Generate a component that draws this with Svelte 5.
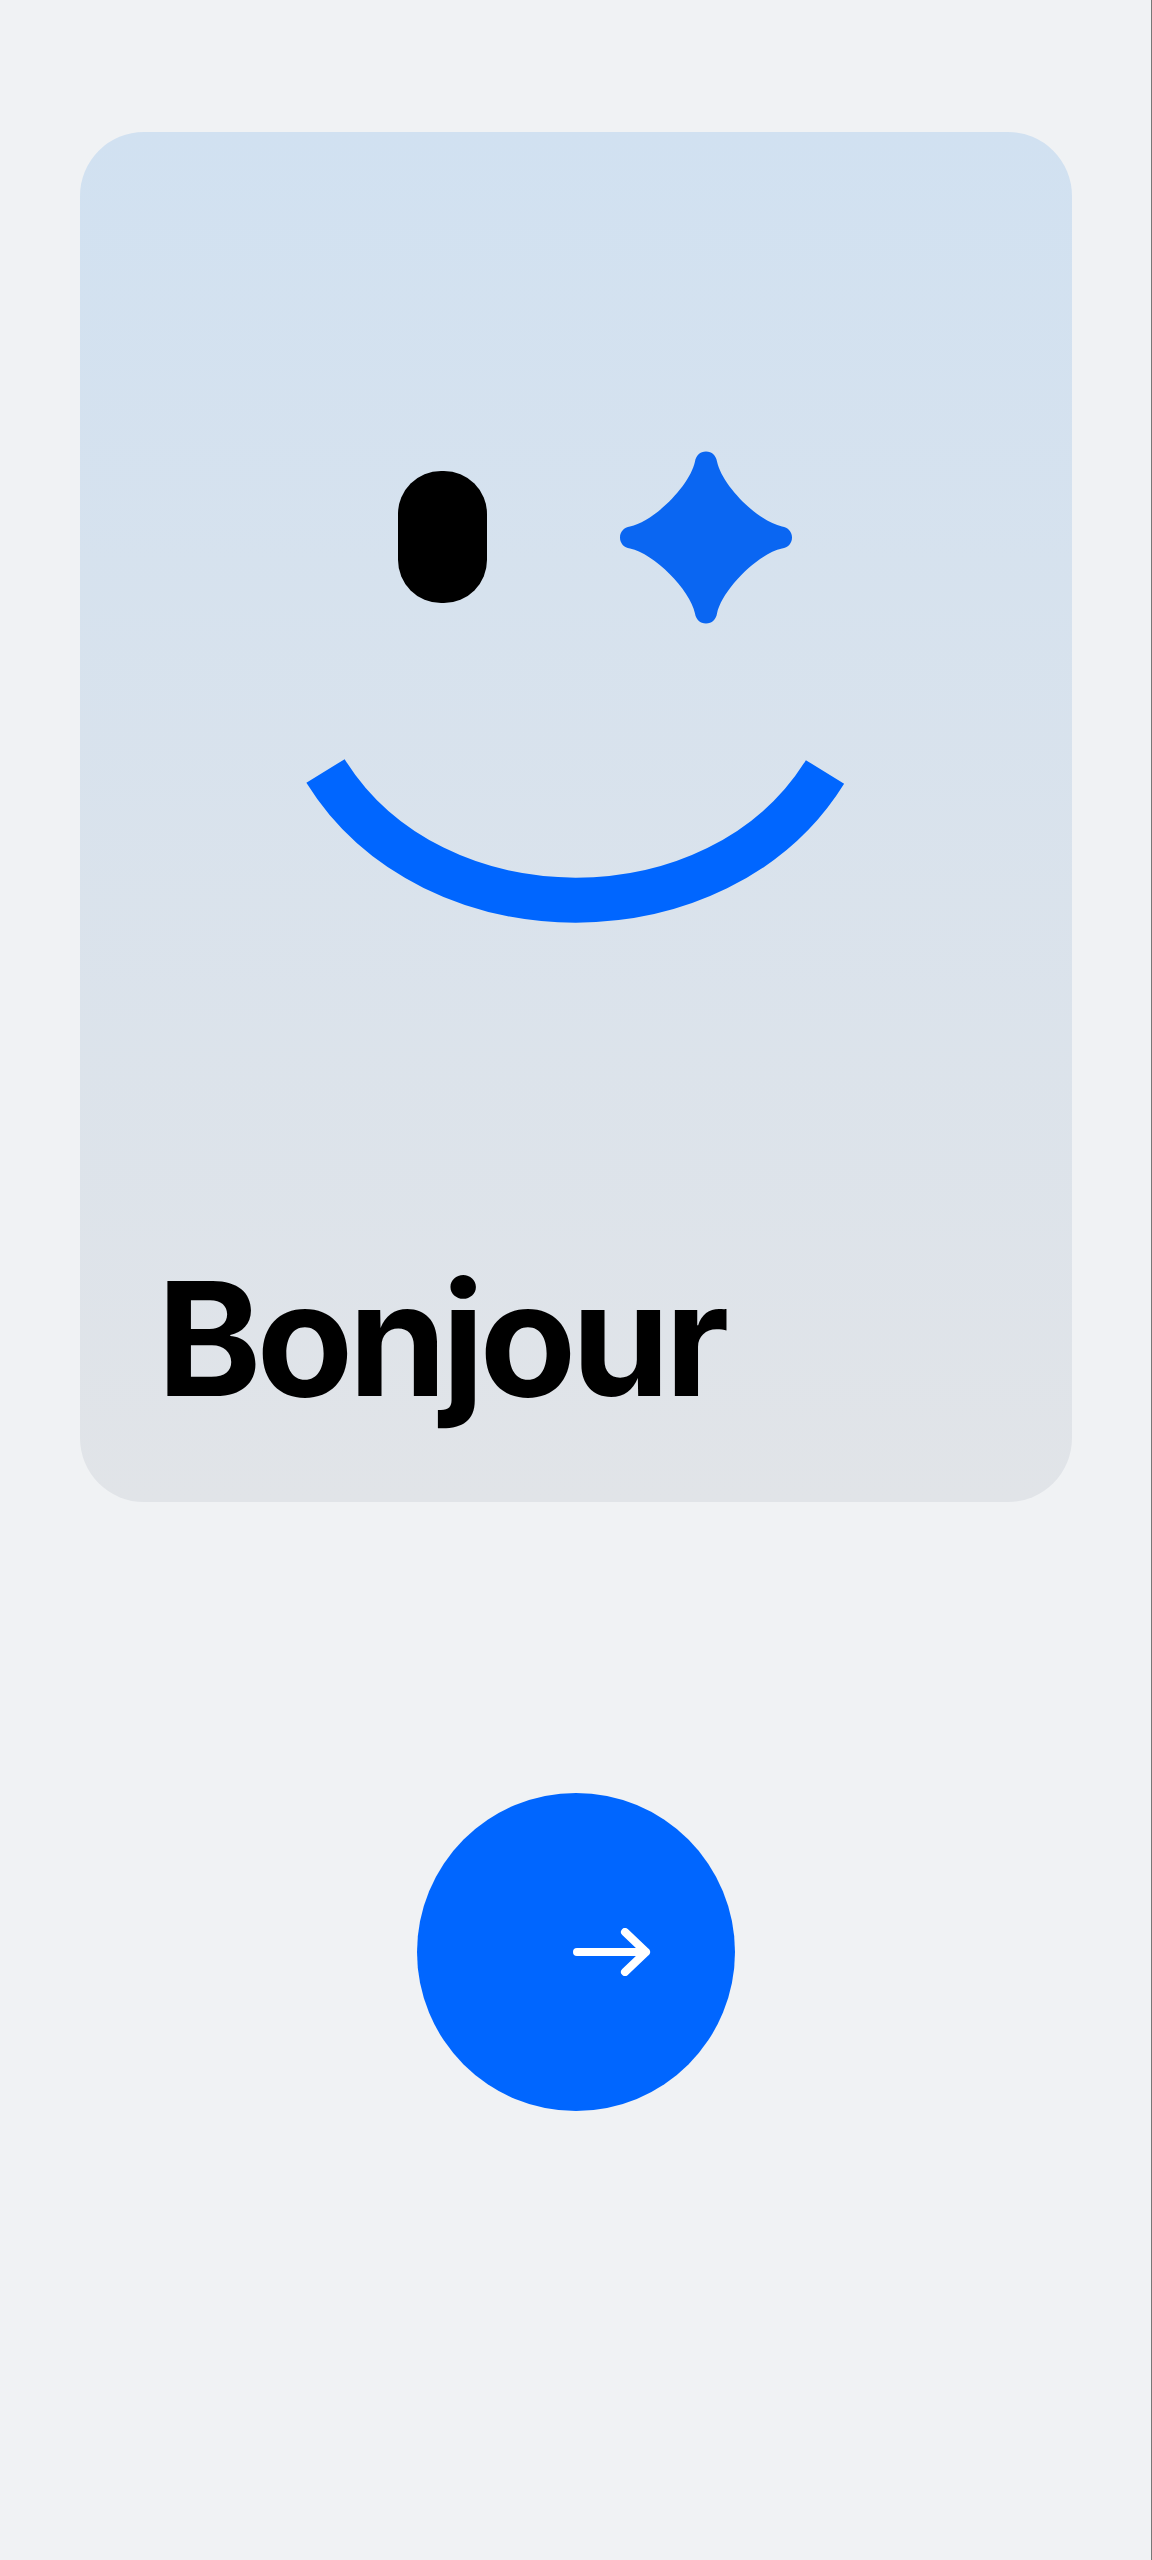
<script>
	let greeting = 'Bonjour';
</script>

<main class="page">
	<section class="card">
		<svg class="face" viewBox="0 0 992 1020" aria-hidden="true">
			<rect x="318" y="339" width="89" height="132" rx="43" fill="#000" />
			<path
				transform="translate(626 405.5)"
				fill="#0a66f2"
				d="M0 -86 C6 -86 10 -82 11 -76 C16 -52 52 -16 76 -11 C82 -10 86 -6 86 0 C86 6 82 10 76 11 C52 16 16 52 11 76 C10 82 6 86 0 86 C-6 86 -10 82 -11 76 C-16 52 -52 16 -76 11 C-82 10 -86 6 -86 0 C-86 -6 -82 -10 -76 -11 C-52 -16 -16 -52 -11 -76 C-10 -82 -6 -86 0 -86 Z"
			/>
			<path
				d="M245.5 639 C352 811 639 811 745 640"
				fill="none"
				stroke="#0066ff"
				stroke-width="45"
			/>
		</svg>
		<h1>{greeting}</h1>
	</section>

	<button class="next" type="button" aria-label="Suivant">
		<svg viewBox="0 0 78 48" width="78" height="48" aria-hidden="true">
			<path
				d="M4 24 H73 M52 4 L73 24 L52 44"
				fill="none"
				stroke="#fff"
				stroke-width="8"
				stroke-linecap="round"
				stroke-linejoin="round"
			/>
		</svg>
	</button>
</main>

<style>
	:global(body) {
		margin: 0;
		background: #f0f2f4;
	}

	.page {
		display: flex;
		flex-direction: column;
		align-items: center;
		box-sizing: border-box;
		height: 2560px;
		padding: 132px 79px 0 80px;
		border-right: 1px solid #777;
		font-family: Inter, 'Liberation Sans', sans-serif;
	}

	.card {
		display: flex;
		flex-direction: column;
		box-sizing: border-box;
		width: 992px;
		height: 1370px;
		padding: 0 77px;
		border-radius: 64px;
		background: linear-gradient(180deg, #d1e1f1 0%, #e1e4e8 100%);
	}

	.face {
		display: block;
		flex: none;
		width: 992px;
		height: 1020px;
		margin: 0 -77px;
	}

	h1 {
		margin: 108px 0 0;
		color: #000;
		font-size: 158px;
		font-weight: 700;
		line-height: 1;
		letter-spacing: -5px;
	}

	.next {
		display: flex;
		align-items: center;
		justify-content: flex-end;
		box-sizing: border-box;
		width: 318px;
		height: 318px;
		margin-top: 291px;
		padding: 0 84px 0 0;
		border: 0;
		border-radius: 50%;
		background: #0066ff;
	}

	.next svg {
		display: block;
	}
</style>
